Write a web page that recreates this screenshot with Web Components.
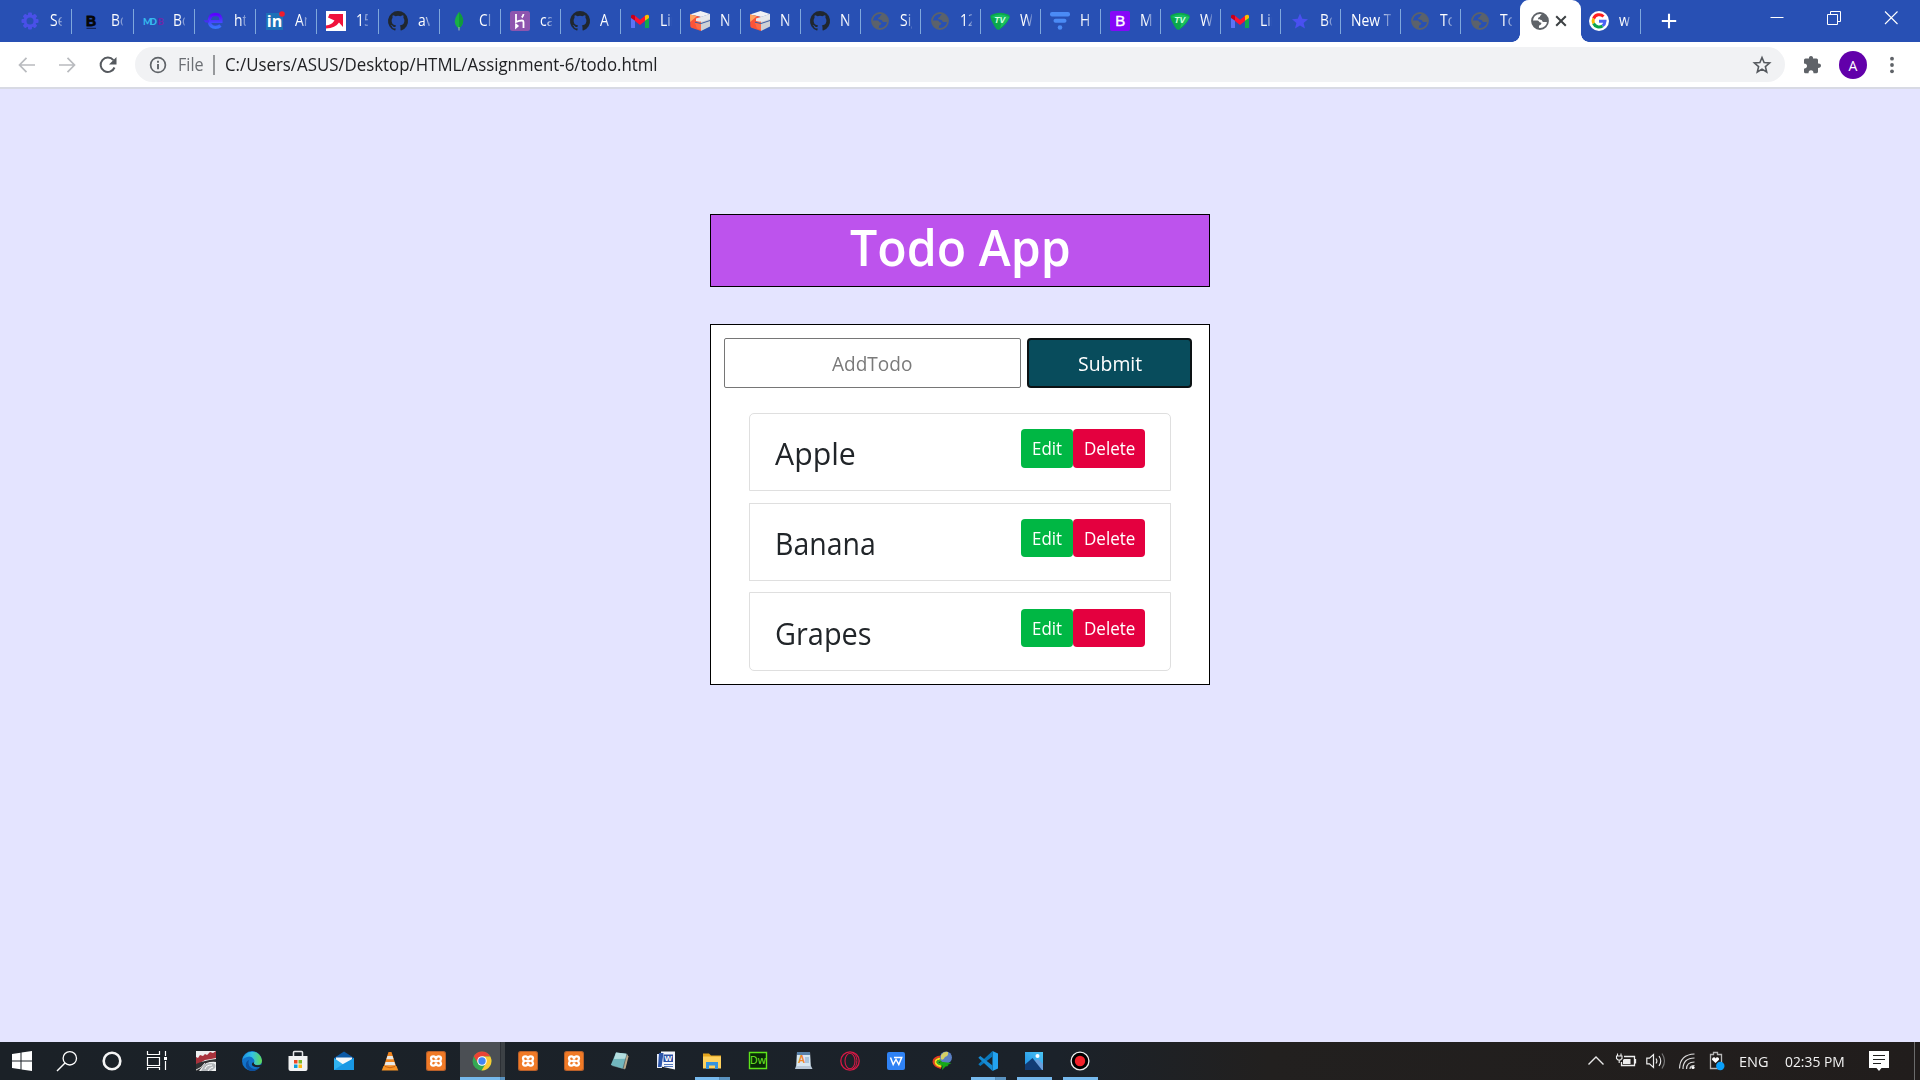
<!DOCTYPE html>
<html lang="en">
<head>
<meta charset="utf-8">
<title>Todo App</title>
<style>
html,body{margin:0;height:100%;overflow:hidden}
body{font-family:"Open Sans","Noto Sans",sans-serif}
</style>
</head>
<body>
<desktop-screen></desktop-screen>
<script>
const gear=[0,45,90,135,180,225,270,315].map(a=>`<rect x="8" y="1.5" width="4" height="4" rx="1" transform="rotate(${a} 10 10)"/>`).join('');
const loop=`M9.800 7.300Q9.500 5.300 7.300 5.300T5 7.500Q5 9.500 6.800 10Q5 10.500 5 12.500T7.300 14.700Q9.500 14.700 9.800 12.700`;
const xampp=`<rect width="20" height="20" rx="2.500" fill="#b9602a"/><rect x="1" y="1" width="18" height="18" rx="2" fill="#f07a26"/><g fill="none" stroke="#fff" stroke-width="2.300" stroke-linecap="round" stroke-linejoin="round"><path d="${loop}"/><path d="${loop}" transform="matrix(-1 0 0 1 20 0)"/><path d="M8.300 10h3.400"/></g>`;
const globe=c=>`<circle cx="10" cy="10" r="8" fill="none" stroke="${c}" stroke-width="1.800"/><path d="M12 2.500c-.5 2-2 1.500-2 3 0 1-2 .5-2 2s2 1 3.500 1.500c1 .5.500 2 2 2h4.200c.8-4-1.700-8-5.700-8.500zM2 9.500h5.500c1.500 0 1.500 2 3 2s1 2-.5 2.500c-1.500.5-1 2-1 3.800C5 17.500 2 14 2 9.500z" fill="${c}"/>`;
const tv=`<path d="M2 3.500Q10 0 18 3.500Q20.500 4.500 19.500 7Q16.500 14 9.500 18.500Q7.500 19.500 6 17.500Q1.500 11 .3 6Q0 4 2 3.500z" fill="#0ba84c"/><path d="M1 6Q10 1 19.500 6Q16 13 10 17Q14 9 1 6z" fill="#18c063"/><text x="9.800" y="12" text-anchor="middle" font-family="Liberation Sans" font-style="italic" font-weight="700" font-size="8.500" fill="#d2ffe4">TV</text>`;
const gmail=`<path d="M1 5v11.500q0 .5.500.5H5V9z" fill="#5b72f5"/><path d="M19 5v11.500q0 .5-.5.500H15V9z" fill="#12a84b"/><path d="M1 6V5Q1.500 3 4 4l1.500 1.200V10L1 7z" fill="#c5001a"/><path d="M19 7V5q-.5-2-3-1l-1.500 1.200V10z" fill="#fbbc04"/><path d="M5 4.800l5 4 5-4V10l-5 4-5-4z" fill="#ff1230"/>`;
const gh=`<path fill="#20272f" d="M10 0a10 10 0 0 0-3.160 19.490c.5.090.680-.22.680-.48v-1.700c-2.780.6-3.370-1.340-3.370-1.340-.45-1.160-1.110-1.470-1.110-1.470-.91-.62.070-.6.070-.6 1 .070 1.530 1.030 1.530 1.030.9 1.530 2.340 1.090 2.910.83.090-.65.350-1.090.64-1.340-2.220-.25-4.560-1.110-4.560-4.940 0-1.090.39-1.980 1.030-2.680-.1-.26-.45-1.280.1-2.650 0 0 .840-.27 2.750 1.020a9.580 9.580 0 0 1 5 0c1.910-1.290 2.750-1.020 2.750-1.020.55 1.370.2 2.390.1 2.650.64.7 1.030 1.590 1.030 2.680 0 3.840-2.340 4.690-4.570 4.940.36.310.68.920.68 1.850v2.740c0 .27.180.58.690.48A10 10 0 0 0 10 0z"/>`;
const cube=`<path d="M10.500 0L20 3l-9 3L0 3.500z" fill="#f1f2f4"/><path d="M0 3.500l11 2.500v14L1.500 16.800Q.3 16.300.3 15z" fill="#fb5439"/><path d="M0 3.500l7 1.500L.2 11z" fill="#ffa662"/><path d="M11 6l9-3v12.500L11 20z" fill="#cdd0d5"/><path d="M6 7.500L11 6l9-3v5l-9 3-5-1z" fill="#e6e8eb"/><path d="M5 12l6-1.500v8.500l-4-1.500z" fill="#fb6d48"/><path d="M5 11.200l6 1.300L20 9.500" fill="none" stroke="#3f5ea6" stroke-width="1"/>`;
const ICONS={
gear:`<g fill="#4a50e8">${gear}</g><circle cx="10" cy="10" r="5" fill="none" stroke="#4a50e8" stroke-width="3"/>`,
bold:`<text x="10" y="15" text-anchor="middle" font-family="Liberation Sans" font-weight="700" font-size="14" fill="#050505" stroke="#050505" stroke-width=".8">B</text><path d="M5.500 17.300h9.500" stroke="#111a40"/>`,
mdb:`<text x="0" y="14" font-family="Lato" font-weight="900" font-size="9.500" fill="#35b8ee" textLength="14">MD</text><text x="14.500" y="14" font-family="Lato" font-weight="900" font-size="9.500" fill="#6e27a8">B</text>`,
e:`<defs><linearGradient id="a" x1="0" y1="0" x2="0" y2="1"><stop stop-color="#5b00ff"/><stop offset="1" stop-color="#3774ff"/></linearGradient></defs><path d="M5 10.500H17Q17.500 3.300 11 3.300Q5.500 3.500 5.200 10.500Q6 16.300 11.500 16.300Q14.500 16.300 16.500 14.500" fill="none" stroke="url(#a)" stroke-width="3.200"/><path d="M-.5 9.300h5.500v2.200H1.500z" fill="#4730f2"/>`,
in:`<rect x="1" y="2" width="17" height="17" fill="#1d70b8"/><text x="9.500" y="15.700" text-anchor="middle" font-family="Open Sans" font-weight="700" font-size="16" fill="#fff">in</text><circle cx="17" cy="3" r="2.800" fill="#f21b2d"/>`,
arrow:`<path d="M0 0h20v20H0z" fill="#fff"/><path d="M3.500 3H17v13l-4-4.500Q9.500 17 0 17.500V14.500Q5.500 14 8.500 9.500L2 6.500z" fill="#f0123c"/>`,
gh,
leaf:`<path d="M10 1Q6 6 5.800 10.500Q6 15 10 17.500Q14 14 14.200 10Q14 5 10 1z" fill="#19b045"/><path d="M10 1Q14 5 14.200 10Q14 14 10 17.500z" fill="#109a3c"/><path d="M10 16v3.500" stroke="#a8bfb0"/>`,
heroku:`<rect width="20" height="20" rx="2.500" fill="#8e55af"/><path d="M6 3v8q3-1.500 6-1.500 1.500 0 1.500 2V17M13.500 3q-.2 2-1.700 3.500M6 13.500v3l1.700-1.500z" fill="none" stroke="#fff" stroke-width="1.800"/>`,
gmail,cube,globe:globe('#5b626b'),globeDark:globe('#5f6368'),tv,
funnel:`<rect y="1" width="20" height="4.500" rx="2" fill="#4b8bf5"/><rect x="3.500" y="7.800" width="13" height="4" rx="2" fill="#4b8bf5"/><circle cx="10" cy="16.500" r="2.300" fill="#4b8bf5"/>`,
bs:`<rect width="20" height="20" rx="2" fill="#8608f8"/><text x="10.200" y="15.200" text-anchor="middle" font-family="Liberation Sans" font-size="15" fill="#fff" stroke="#fff" stroke-width=".4">B</text>`,
star:`<path d="M10 2.500l2.300 5.300 5.700.4-4.400 3.700 1.400 5.600-5-3-5 3 1.400-5.600L2 8.200l5.700-.4z" fill="#4a50f0"/>`,
google:`<circle cx="10" cy="10" r="10" fill="#fff"/><g fill="none" stroke-width="3"><path d="M14.500 5.500A6 6 0 0 0 4.600 7.600" stroke="#ff1f1f"/><path d="M4.600 7.600A6 6 0 0 0 4.600 12.500" stroke="#fbbc04"/><path d="M4.600 12.500A6 6 0 0 0 13.500 14.900" stroke="#0da64a"/><path d="M13.500 14.900A6 6 0 0 0 16 10.200H10" stroke="#4a63f3"/></g>`,
plus:`<path d="M10 1v18M1 10h18" stroke="#fff" stroke-width="2.600"/>`,
x:`<path d="M5.200 5.200l9.600 9.600M14.800 5.200L5.200 14.800" stroke="#3c4043" stroke-width="2"/>`,
min:`<path d="M3.500 9.500h13" stroke="#fff"/>`,
max:`<path d="M3.500 6.500h10v10h-10zM6.500 6.500v-3h10v10h-3" fill="none" stroke="#fff"/>`,
close:`<path d="M4 3.500l12.500 12.500M16.500 3.500L4 16" stroke="#fff" stroke-width="1.100"/>`,
back:`<path d="M18 10H3M9.500 2.800L2.500 10l7 7.200" fill="none" stroke="#b9bbbf" stroke-width="1.700"/>`,
fwd:`<path d="M2 10h15M10.500 2.800l7 7.200-7 7.200" fill="none" stroke="#b9bbbf" stroke-width="1.700"/>`,
reload:`<path d="M16.500 12.500A7.200 7.200 0 1 1 15.400 5.200" fill="none" stroke="#55595e" stroke-width="2"/><path d="M18.500 2v7.500H11z" fill="#55595e"/>`,
info:`<circle cx="10" cy="10" r="7.400" fill="none" stroke="#5f6368" stroke-width="1.700"/><path d="M10 9v5.300M10 5.700v2" stroke="#5f6368" stroke-width="1.900"/>`,
fav:`<path d="M10 2.500l2.100 5.100 5.500.4-4.200 3.600 1.300 5.400-4.700-2.900L5.300 17l1.300-5.400L2.400 8l5.500-.4z" fill="none" stroke="#55595e" stroke-width="1.600"/>`,
puzzle:`<path d="M2 5q0-1.500 1.500-1.500H7Q6.700 1 9 1t2 2.500h3.500Q16 3.500 16 5v3.500q3-.3 3 2T16 13v3.800q0 1.400-1.500 1.400h-3q0-3-2.500-3t-2.500 3h-3Q2 18.200 2 16.700v-3q3-.2 3-2.600T2 8.500z" fill="#5f6368"/>`,
dots:`<g fill="#5f6368"><circle cx="10" cy="3.700" r="1.900"/><circle cx="10" cy="10" r="1.900"/><circle cx="10" cy="16.300" r="1.900"/></g>`,
win:`<path d="M0 3l8.500-1.200V9.500H0zM9.500 1.600L20 0v9.500H9.500zM0 10.500h8.500v7.800L0 17zM9.500 10.500H20V20L9.500 18.500z" fill="#fff"/>`,
search:`<circle cx="12.800" cy="7.300" r="6.700" fill="none" stroke="#fff" stroke-width="1.300"/><path d="M8 12L0 20" stroke="#fff" stroke-width="1.500"/>`,
cortana:`<circle cx="10" cy="10" r="8.300" fill="none" stroke="#f4f4f4" stroke-width="2.600"/>`,
task:`<path d="M.5 0v3.500h12V0M.5 6.500h12v8H.5zM.5 19v-2.500h12V19M18.500 0v5M18.500 10v9" fill="none" stroke="#fff" stroke-width="1.200"/><path d="M17 6h3v3h-3z" fill="#fff"/>`,
art:`<path d="M0 0h20v20H0z" fill="#eef0f0"/><path d="M0 10V6l2 1 2-3 3 1 2-2 2 1 3-3 3 1 3-2v7l-5 1-6 1-5 3-4 2z" fill="#a8323c"/><path d="M0 13Q6 10 20 8v3Q10 10 6 16l-3 4H0z" fill="#303133"/><path d="M7 16Q9 12 15 12t4 5l-4 3H5z" fill="#b4b8bb"/><path d="M9 18q1-4 7-4M12 20q1-3 5-4" stroke="#fff" fill="none"/><path d="M0 19q6-2 9-7" stroke="#ddd" fill="none"/>`,
edge:`<defs><linearGradient id="a" x2="1"><stop stop-color="#1d8fe0"/><stop offset=".5" stop-color="#32c3e6"/><stop offset="1" stop-color="#63da52"/></linearGradient></defs><circle cx="10" cy="10" r="10" fill="#1172ca"/><path d="M.2 9A10 10 0 0 1 20 9.500q0 4.500-5 4.500-3.500 0-3.300-1.700Q13 11 12 8.500 9.500 4.500 5 6 1.500 7 .2 9z" fill="url(#a)"/><path d="M7 9q-2 5 2.500 8 4 2 8-.5A10 10 0 0 1 8.500 20Q2 17 4.500 11 5.500 9.500 7 9z" fill="#0d4f9c"/><path d="M11.600 11q-.5 3.200 4.400 3.200 2.500 0 3.500-1l-1 2.500q-4 1.300-7.500-.8-2.500-2 .6-3.900z" fill="#1d2126"/>`,
store:`<path d="M5.500 6V1.500Q5.500.5 6.500.5h7q1 0 1 1V6" fill="none" stroke="#e5e7e9" stroke-width="1.500"/><path d="M.5 5h19v13q0 2-2 2h-15q-2 0-2-2z" fill="#f2f3f4"/><path d="M6 9h3.500v3.500H6z" fill="#ed4824"/><path d="M10.500 9H14v3.500h-3.500z" fill="#79b829"/><path d="M6 13.500h3.500V17H6z" fill="#0a9edc"/><path d="M10.500 13.500H14V17h-3.500z" fill="#fdb813"/>`,
mail:`<path d="M0 7l10-6.500L20 7v3H0z" fill="#0c5aa6"/><path d="M2 6.500h16v8H2z" fill="#f5f8fa"/><path d="M0 7l10 7 10-7v12H0z" fill="#30b2f0"/><path d="M0 19l10-6.500L20 7v12z" fill="#1898e4"/>`,
vlc:`<path d="M8.500 1h3L17 18H3z" fill="#f0831c"/><path d="M7.400 5h5.200l1 3.200H6.400zM5.600 11h8.800l1 3.200H4.600z" fill="#e9e9e6"/><path d="M3.500 15h13l1.800 4.500H1.700z" fill="#f79324"/><path d="M5 15.500Q10 18 15 15.500" fill="none" stroke="#b94e08" stroke-width=".7"/>`,
xampp,
chrome:`<circle cx="10" cy="10" r="9.500" fill="#34a853"/><path d="M1.800 5.300A9.500 9.500 0 0 1 18.300 5.500H10L5.900 12z" fill="#ea4335"/><path d="M18.300 5.500A9.500 9.500 0 0 1 9.500 19.500L14 12.300 10 5.500z" fill="#fbc934"/><circle cx="10" cy="10" r="4.800" fill="#fff"/><circle cx="10" cy="10" r="3.700" fill="#4285f4"/>`,
note:`<path d="M6 2l12 1.500-3 15L2 15z" fill="#5c7174"/><path d="M6 1.500l10.500 1.300-4 14.700L.8 14z" fill="#72b7be"/><path d="M6 1.500l10.500 1.300-1.300 5L4 8z" fill="#b4dedf"/><path d="M17 3.500l1.500 2-3 12-2 .500z" fill="#bda989"/>`,
word:`<path d="M5 .500h14v18l-14-3z" fill="#f4f6fb"/><path d="M1 3h5v14H1z" fill="#e8edf7"/><path d="M3 2h4.500l-2 14H2z" fill="#2c55a9"/><path d="M7.500 3.500h9.500v7.500H7.500z" fill="#2c50a6"/><path d="M8 13.500h9M8 15.500h9" stroke="#5478bb"/><text x="12.200" y="9.900" text-anchor="middle" font-family="Liberation Sans" font-size="8" font-weight="700" fill="#fff">W</text>`,
folder:`<path d="M1 2.500h6l2 2h10v3H1z" fill="#e5a51d"/><path d="M1 5.500h18v12H1z" fill="#fed15d"/><path d="M4 18v-7h12v7h-3v-3.500H7V18z" fill="#3494df"/>`,
dw:`<path d="M1.500 1.500h17v16h-17z" fill="#082a06" stroke="#5ee51b" stroke-width="1.400"/><text x="10" y="13.400" text-anchor="middle" font-family="Open Sans" font-size="10.500" fill="#72ef27">Dw</text>`,
pad:`<path d="M3 1h13l1 17H2z" fill="#d8e7f2"/><path d="M3 1h13v3H3z" fill="#5a82aa"/><text x="7.500" y="12" text-anchor="middle" font-family="Liberation Sans" font-size="10" font-weight="700" fill="#f08527">A</text><path d="M11 7h4M11 9h4M11 11h4" stroke="#7aa4ca"/><path d="M2 15h15l1.500 3H1z" fill="#b9c8d8"/>`,
opera:`<g fill="none" stroke="#d61945"><circle cx="10" cy="10" r="9.200" stroke-width="1.300"/><ellipse cx="10" cy="10" rx="5" ry="7.700" stroke-width="1.100"/><path d="M12 1.500c6 1.500 7 14 0 17" /></g>`,
wps:`<rect x="1" y="1" width="18" height="18" rx="2" fill="#2f82f4"/><path d="M4.500 6.500L7.200 13.500L10 8.500L12.800 13.500L15.700 6.500H8" fill="none" stroke="#fff" stroke-width="1.500"/>`,
idm:`<g fill="none" stroke-width="2"><path d="M9.500 5.500Q1.500 6 1.500 11Q2 15.500 9 17" stroke="#e53b21"/><path d="M10 7.500Q3.500 7.500 3.500 11Q4 14.500 9.500 15.500" stroke="#f4dd1e"/><path d="M10 9.500Q5.500 9.500 5.500 11.500Q6 13 10 13.500" stroke="#34b52b"/></g><circle cx="14" cy="6.500" r="6" fill="#5a7fc4"/><path d="M9 4q3-4 7-3 1 4-3 5-2 4-4 2z" fill="#d4cf65"/><path d="M7 10.500l12.500 1.500-4 2 1 1-3 .5-3.500 3.500.500-4z" fill="#16a918"/>`,
vs:`<path d="M14.500 0L20 2.500v15L14.500 20z" fill="#23a3f1"/><path d="M14.500 0v5.500L2.300 15 .3 13.300z" fill="#0878bd"/><path d="M14.500 20v-5.500L2.300 5 .3 6.700z" fill="#168bd3"/>`,
photo:`<defs><linearGradient id="a" x1="0" y1="1" x2="1" y2="0"><stop stop-color="#1d8ce4"/><stop offset="1" stop-color="#4ac4f3"/></linearGradient></defs><path d="M1 1h18v18H1z" fill="url(#a)"/><path d="M10 10l4-2 5 5v6H10z" fill="#699edb"/><path d="M1 13.500L8.500 7 18 19H1z" fill="#123c75"/><circle cx="13.500" cy="5" r="2" fill="#fff"/>`,
rec:`<circle cx="10" cy="10" r="8.900" fill="#000" stroke="#eee" stroke-width="1.300"/><circle cx="10" cy="10" r="5.200" fill="#f3202a"/>`,
up:`<path d="M2.500 13.500L10 6l7.500 7.500" fill="none" stroke="#e8e8e8" stroke-width="1.400"/>`,
batt:`<path d="M8 5.500h10.500v9h-13V11M19.500 8v4.500" fill="none" stroke="#eee" stroke-width="1.300"/><path d="M8 8h6.500v5H7V9z" fill="#eee"/><path d="M1.500 2.500v2M5 2.500v2M.5 5h5.500v2.500L4.500 9H2L.5 7.500zM3.200 9v3" fill="none" stroke="#eee" stroke-width="1.100"/>`,
vol:`<path d="M.8 7.200h2.700l4-3.700v13l-4-3.700H.8z" fill="none" stroke="#eee" stroke-width="1.200"/><path d="M10 7.500q1.800 2.500 0 5M13 5q3.500 5 0 10" fill="none" stroke="#eee" stroke-width="1.100"/><path d="M16 2.500q5 7.500 0 15" fill="none" stroke="#777" stroke-width="1.200"/>`,
wifi:`<g fill="none" stroke="#ddd" stroke-width="1.200"><path d="M2.500 17.500Q3 3.500 17.500 3M6 18Q6 7 17.500 7M9.500 18Q9.500 11 17.500 11M13 18q0-3.500 4.500-3.500"/></g><circle cx="16" cy="16.500" r="1.600" fill="#fff"/>`,
heart:`<path d="M4.500 3.500H7.500V1.500h4v2h4v14h-11z" fill="none" stroke="#b8b8b8" stroke-width="1.300"/><path d="M9.500 12L6 8.700Q6 6 8 6.200q1.200 0 1.700 1.300Q10 6 11.500 6.200 13.500 6.500 13 8.700z" fill="#fff"/><circle cx="14.300" cy="15" r="4.200" fill="#0aa0fb"/>`,
notif:`<path d="M0 0h20v17h-7.500L10 20l-2.500-3H0z" fill="#fff"/><path d="M4 4.500h12M4 8.500h12M4 12.500h8" stroke="#20201f" stroke-width="1.100"/>`
};
const define=(name,build)=>customElements.define(name,class extends HTMLElement{
  connectedCallback(){ if(this.shadowRoot)return; this.attachShadow({mode:'open'}).innerHTML=build(this); }
});

define('ui-icon',el=>{const s=el.getAttribute('size')||20;
 return `<style>:host{display:block;flex:none;width:${s}px;height:${s}px}svg{display:block;overflow:visible}</style><svg width="${s}" height="${s}" viewBox="0 0 20 20">${ICONS[el.getAttribute('name')]}</svg>`;});

/* One line of text condensed or widened to a fixed advance width. */
customElements.define('fit-text',class extends HTMLElement{
  connectedCallback(){
    if(this.shadowRoot)return;
    const w=+this.getAttribute('w');
    this.attachShadow({mode:'open'}).innerHTML=`<style>:host{display:block;flex:none;width:${w}px;white-space:nowrap}span{display:inline-block;transform-origin:0 50%}</style><span><slot></slot></span>`;
    const s=this.shadowRoot.querySelector('span');
    s.style.transform=`scaleX(${w/s.offsetWidth})`;
  }
});

define('browser-tab',el=>{
 const icon=el.getAttribute('icon'),active=el.hasAttribute('active');
 return `<style>
:host{display:flex;align-items:center;box-sizing:border-box;flex:none;width:${el.getAttribute('w')||60}px;height:42px;color:#fff;font-size:15.5px;line-height:20px;padding-left:${icon?'9px':'10px'};position:relative}
:host::after{content:"";position:absolute;right:0;top:9px;width:1px;height:25px;background:#7fa8dc}
:host([active])::after,:host([nosep])::after{display:none}
:host([active]){background:#fff;border-radius:9px 9px 0 0;width:61px;padding-left:10px;margin:0 -1px 0 0;gap:1px}
:host([active])::before{content:"";position:absolute;left:-8px;right:-8px;bottom:0;height:8px;background:radial-gradient(circle at 0 0,transparent 7.500px,#fff 8px) 0 0/8px 8px no-repeat,radial-gradient(circle at 100% 0,transparent 7.500px,#fff 8px) 100% 0/8px 8px no-repeat}
.t{width:${icon?12:40}px;margin:0 0 2px ${icon?'10px':0};overflow:hidden;white-space:nowrap;-webkit-mask:linear-gradient(90deg,#000 calc(100% - ${icon?6:12}px),rgba(0,0,0,.25))}
.t span{display:inline-block;transform:scaleX(.9);transform-origin:0 0}
</style>${icon?`<ui-icon name="${icon}"></ui-icon>`:''}${active?'<ui-icon name="x" size="20"></ui-icon>':'<div class="t"><span><slot></slot></span></div>'}`;});

define('tab-strip',()=>{
 const tabs=[['gear','Se',61],['bold','Bo',62],['mdb','Bo',61],['e','htt',61],['in','An',61],['arrow','15',62],['gh','av',61],['leaf','Cl',61],['heroku','ca'],['gh','A'],['gmail','Lin'],['cube','N'],['cube','N'],['gh','N'],['globe','Sig'],['globe','12'],['tv','W'],['funnel','H'],['bs','M'],['tv','W'],['gmail','Lin'],['star','Bo'],['','New T'],['globe','To'],['globe','To',59],['globeDark','',61,1],['google','w',61]];
 return `<style>:host{display:flex;height:42px;background:#2850b4;padding-left:11px;box-sizing:border-box}
.win{display:flex;margin-left:auto;padding:8px 19px 0 0;gap:37px}.plus{padding:13px 0 0 20px}</style>
${tabs.map((t,i)=>`<browser-tab icon="${t[0]}" w="${t[2]||60}" ${t[3]?'active':''} ${i==24?'nosep':''}>${t[1]}</browser-tab>`).join('')}
<div class="plus"><ui-icon name="plus" size="16"></ui-icon></div>
<div class="win"><ui-icon name="min"></ui-icon><ui-icon name="max"></ui-icon><ui-icon name="close"></ui-icon></div>`;});

define('address-bar',()=>`<style>
:host{display:flex;align-items:center;height:45px;background:#fff;border-bottom:2px solid #d8dae4;box-sizing:content-box}
.nav{display:flex;gap:20px;padding-left:17px;width:118px}
.nav ui-icon:last-child{margin-left:1px}
.omni{display:flex;align-items:center;width:1650px;height:35px;border-radius:18px;background:#f1f2f4;box-sizing:border-box;padding:0 13px;font-size:18px;line-height:24px;color:#202124}
fit-text{margin-bottom:2px}
.file{color:#6b6e73;margin-left:10px}.bar{width:2px;height:20px;background:#97999c;margin:0 10px 0 9px}
.fav{margin-left:auto}
.av{width:28px;height:28px;border-radius:50%;background:#6200aa;color:#fff;font:14px/29px "Open Sans";text-align:center;margin:0 15px 0 17px}
.pz{margin-left:17px}
</style><div class="nav"><ui-icon name="back"></ui-icon><ui-icon name="fwd"></ui-icon><ui-icon name="reload"></ui-icon></div>
<div class="omni"><ui-icon name="info"></ui-icon><fit-text class="file" w="26">File</fit-text><div class="bar"></div><fit-text w="433">C:/Users/ASUS/Desktop/HTML/Assignment-6/todo.html</fit-text><ui-icon class="fav" name="fav"></ui-icon></div>
<ui-icon class="pz" name="puzzle"></ui-icon><div class="av">A</div><ui-icon name="dots" size="20"></ui-icon>`);

define('todo-button',el=>`<style>:host{display:flex;justify-content:center;box-sizing:border-box;height:38px;border-radius:4px;color:#fff;font-size:18px;line-height:24px;padding-top:7px;width:${el.getAttribute('width')}px;background:${el.getAttribute('tone')}}</style><fit-text w="${el.getAttribute('tw')}"><slot></slot></fit-text>`);

define('todo-item',el=>`<style>:host{display:flex;justify-content:space-between;align-items:flex-start;box-sizing:border-box;width:422px;height:78px;border:1px solid #dfdfdf;background:#fff;padding:15px 25px 0 25px;font-size:31px;line-height:42px;color:#212529}
.n{margin-top:3px}.b{display:flex}:host(:first-child) todo-button{height:39px}</style><fit-text class="n" w="${el.getAttribute('tw')}"><slot></slot></fit-text>
<div class="b"><todo-button width="52" tw="30" tone="#00b744">Edit</todo-button><todo-button width="72" tw="51" tone="#e4003f">Delete</todo-button></div>`);

define('todo-app',()=>`<style>
:host{display:flex;flex-direction:column;align-items:center;flex:1;background:#e4e4ff;padding-top:125px}
h1{margin:0;box-sizing:border-box;width:500px;height:73px;border:1px solid #000;background:#bd53ed;color:#fff;font-size:50px;font-weight:600;line-height:64px;display:flex;justify-content:center}
.card{box-sizing:border-box;width:500px;height:361px;margin-top:37px;border:1px solid #000;background:#fff;padding:13px}
.row{display:flex;gap:6px;font-size:20px;line-height:26px}
.in,.sub{box-sizing:border-box;height:50px;display:flex;justify-content:center;align-items:center;padding-top:2px}
.in{width:297px;border:1px solid #767676;border-radius:2px;color:#7a7a7a;padding-right:1px}
.sub{width:165px;border:2px solid #0c1214;border-radius:4px;background:#084c5c;color:#fff}
.list{display:flex;flex-direction:column;gap:12px;margin:25px 0 0 25px}
todo-item:first-child{border-radius:5px 5px 0 0}todo-item:last-child{border-radius:0 0 5px 5px;height:79px;margin-top:-1px;padding-top:16px}
</style><h1><fit-text w="221">Todo App</fit-text></h1>
<div class="card"><div class="row"><div class="in"><fit-text w="80">AddTodo</fit-text></div><div class="sub"><fit-text w="64">Submit</fit-text></div></div>
<div class="list"><todo-item tw="81">Apple</todo-item><todo-item tw="101">Banana</todo-item><todo-item tw="97">Grapes</todo-item></div></div>`);

define('task-button',el=>`<style>:host{display:flex;align-items:center;justify-content:center;position:relative;flex:none;width:46px;height:38px}
:host([current])::before{content:"";position:absolute;left:1px;top:0;width:45px;height:38px;background:linear-gradient(90deg,#4b4f54 40px,#2c3035 40px,#2c3035 41px,#3c4145 41px)}
:host([open])::after{content:"";position:absolute;left:6px;bottom:0;width:35px;height:3px;background:#76b9ed}
:host([multi])::after{background:linear-gradient(90deg,#76b9ed 24px,#4a82b0 24px,#5a93c0 25px)}
:host([current])::after{left:1px;width:45px;background:linear-gradient(90deg,#76b9ed 40px,#4a82b0 40px,#5a93c0 41px)}
ui-icon{position:relative}</style><ui-icon name="${el.getAttribute('icon')}"></ui-icon>`);

define('task-bar',()=>{
 const apps=['art','edge','store','mail','vlc','xampp','chrome:open multi current','xampp','xampp','note','word','folder:open multi','dw','pad','opera','wps','idm','vs:open multi','photo:open','rec:open'];
 return `<style>:host{display:flex;height:38px;background:linear-gradient(90deg,#1b2127 0,#1b222a 55%,#22201f 66%,#211d1c 100%);color:#f2f2f2;font-size:15px;line-height:20px}
.sys{display:flex;width:183px}.sys task-button{width:45px;margin-left:-1px;margin-right:1px}.apps{display:flex}
.tray{display:flex;align-items:center;margin-left:auto}.show{width:1px;height:38px;background:#6b6b6b;margin:0 5px 0 25px}
</style><div class="sys">${['win','search','cortana','task'].map(n=>`<task-button icon="${n}"></task-button>`).join('')}</div>
<div class="apps">${apps.map(a=>{const[n,s='']=a.split(':');return `<task-button icon="${n}" ${s}></task-button>`}).join('')}</div>
<div class="tray"><ui-icon name="up" style="margin-right:10px"></ui-icon><ui-icon name="batt" style="margin-right:10px"></ui-icon><ui-icon name="vol" style="margin-right:11px"></ui-icon><ui-icon name="wifi" style="margin-right:9px"></ui-icon><ui-icon name="heart" style="margin-right:13px"></ui-icon><fit-text w="30" style="margin-right:16px">ENG</fit-text><fit-text w="60" style="margin-right:24px">02:35 PM</fit-text><ui-icon name="notif"></ui-icon><div class="show"></div></div>`;});

define('desktop-screen',()=>`<style>:host{display:flex;flex-direction:column;width:1920px;height:1080px;overflow:hidden}</style><tab-strip></tab-strip><address-bar></address-bar><todo-app></todo-app><task-bar></task-bar>`);
</script>
</body>
</html>
